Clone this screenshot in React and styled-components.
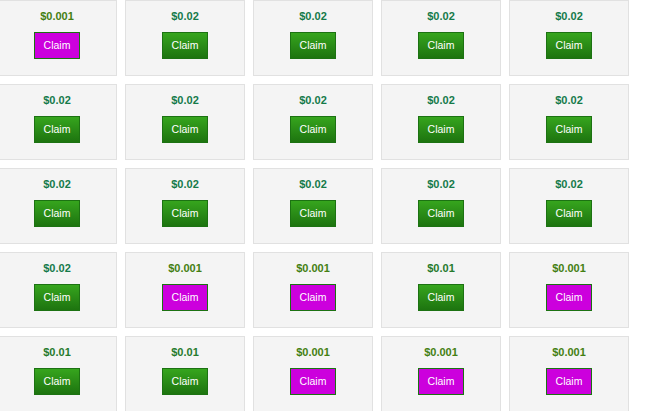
import React from "react";
import styled, { createGlobalStyle } from "styled-components";

const Global = createGlobalStyle`
  html, body { margin: 0; padding: 0; background: #ffffff; overflow: hidden; }
  body { font-family: "Liberation Sans", Arial, sans-serif; }
`;

const Grid = styled.div`
  display: grid;
  grid-template-columns: repeat(5, 120px);
  grid-auto-rows: 76px;
  gap: 8px;
  margin: 0 0 0 -3px;
`;

const Card = styled.div`
  box-sizing: border-box;
  background: #f4f4f4;
  border: 1px solid #e1e1e1;
  display: flex;
  flex-direction: column;
  align-items: center;
  padding-top: 9px;
`;

const priceColors = {
  "0.02": "#157a4a",
  "0.01": "#267a2c",
  "0.001": "#447f12",
};

const Price = styled.div`
  font-size: 11px;
  font-weight: bold;
  line-height: 13px;
  color: ${(p) => p.$color};
  margin-bottom: 9px;
`;

const ClaimButton = styled.button`
  box-sizing: border-box;
  width: 46px;
  height: 27px;
  padding: 0 0 1px;
  font-family: "Liberation Sans", Arial, sans-serif;
  font-size: 10.5px;
  line-height: 25px;
  color: #ffffff;
  border: 1px solid #1c7212;
  background: ${(p) =>
    p.$magenta
      ? "#cc00dd"
      : "linear-gradient(to bottom, #36a51d 0%, #2a8c17 50%, #1d740f 100%)"};
  cursor: pointer;
`;

const rows = [
  ["0.001", "0.02", "0.02", "0.02", "0.02"],
  ["0.02", "0.02", "0.02", "0.02", "0.02"],
  ["0.02", "0.02", "0.02", "0.02", "0.02"],
  ["0.02", "0.001", "0.001", "0.01", "0.001"],
  ["0.01", "0.01", "0.001", "0.001", "0.001"],
];

export default function App() {
  return (
    <>
      <Global />
      <Grid>
        {rows.flat().map((v, i) => (
          <Card key={i}>
            <Price $color={priceColors[v]}>${v}</Price>
            <ClaimButton $magenta={v === "0.001"}>Claim</ClaimButton>
          </Card>
        ))}
      </Grid>
    </>
  );
}
